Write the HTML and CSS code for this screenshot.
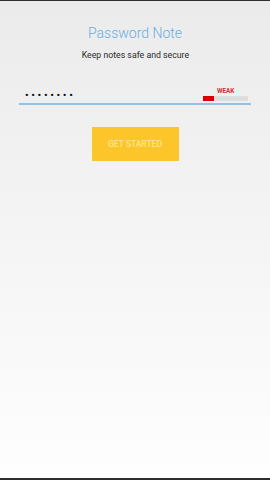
FILE: index.html
```html
<!DOCTYPE html>
<html lang="en">
<head>
    <meta charset="UTF-8">
    <meta name="viewport" content="width=device-width, initial-scale=1.0">
    <title>Password Note</title>
    <link rel="stylesheet" href="styles.css">
</head>
<body>
    <div class="screen">
        <h1 class="title">Password Note</h1>
        <p class="subtitle">Keep notes safe and secure</p>

        <div class="field">
            <span class="dots">&bull;&bull;&bull;&bull;&bull;&bull;&bull;&bull;</span>
            <div class="strength">
                <span class="strength-label">WEAK</span>
                <div class="meter"><div class="meter-fill" style="width: 24%;"></div></div>
            </div>
        </div>

        <button class="start">GET STARTED</button>
    </div>
</body>
</html>
```

FILE: styles.css
```css
html, body {
    height: 100%;
}
body {
    margin: 0;
    font-family: Roboto, "Noto Sans", sans-serif;
    background: #2e2e2e;
}
.screen {
    box-sizing: border-box;
    height: 477px;
    margin-top: 1px;
    background: linear-gradient(#ebebeb, #fefefe);
    display: flex;
    flex-direction: column;
    align-items: center;
    padding-top: 23px;
}
.title {
    margin: 0;
    font-size: 14px;
    font-weight: 300;
    color: #6aaee2;
    line-height: 18px;
}
.subtitle {
    margin: 6px 0 0;
    font-size: 9.5px;
    color: #2b2b2b;
    line-height: 14px;
    transform: scaleX(0.92);
}
.field {
    box-sizing: border-box;
    width: 232px;
    margin-top: 23px;
    height: 20px;
    border-bottom: 2px solid #90c2e6;
    display: flex;
    justify-content: space-between;
    align-items: flex-end;
    padding: 0 3px 2px 6px;
}
.dots {
    font-size: 11px;
    letter-spacing: 2.6px;
    color: #111;
    line-height: 10px;
}
.strength {
    display: flex;
    flex-direction: column;
    align-items: flex-end;
    width: 45px;
}
.strength-label {
    font-size: 7px;
    font-weight: 700;
    color: #d32f2f;
    line-height: 8px;
    margin-right: 13px;
    margin-bottom: 1px;
    transform: scaleX(0.9);
}
.meter {
    width: 45px;
    height: 5px;
    background: #dedede;
}
.meter-fill {
    height: 100%;
    background: #d50000;
}
.start {
    margin-top: 22px;
    width: 87px;
    height: 34px;
    border: none;
    border-radius: 0;
    background: #fcc52a;
    color: #fde68f;
    font-family: Roboto, "Noto Sans", sans-serif;
    font-size: 8.5px;
    font-weight: 500;
    padding: 0;
}
```
